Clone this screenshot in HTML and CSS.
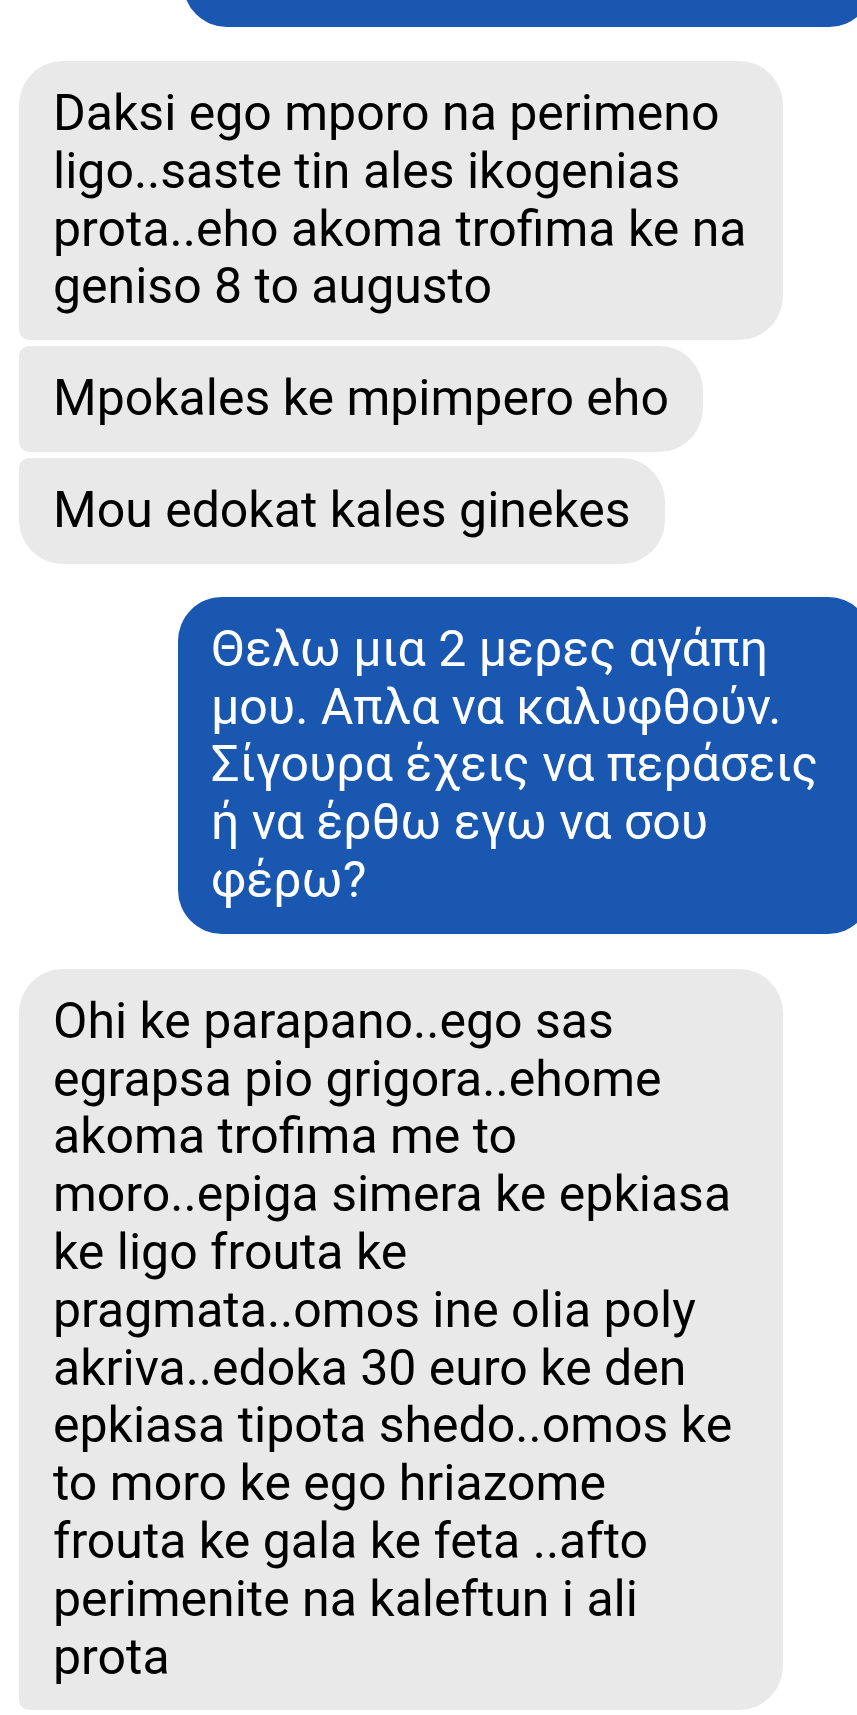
FILE: index.html
```html
<!DOCTYPE html>
<html lang="en">
<head>
    <meta charset="UTF-8">
    <meta name="viewport" content="width=device-width, initial-scale=1.0">
    <title>Chat</title>
    <link rel="stylesheet" href="styles.css">
</head>
<body>
<div class="thread">
    <div class="msg sent sent-tail"></div>

    <div class="group">
        <div class="msg received first wide">
            Daksi ego mporo na perimeno<br>
            ligo..saste tin ales ikogenias<br>
            prota..eho akoma trofima ke na<br>
            geniso 8 to augusto
        </div>
        <div class="msg received middle">Mpokales ke mpimpero eho</div>
        <div class="msg received last">Mou edokat kales ginekes</div>
    </div>

    <div class="msg sent sent-full">
        Θελω μια 2 μερες αγάπη<br>
        μου. Απλα να καλυφθούν.<br>
        Σίγουρα έχεις να περάσεις<br>
        ή να έρθω εγω να σου<br>
        φέρω?
    </div>

    <div class="msg received first wide">
        Ohi ke parapano..ego sas<br>
        egrapsa pio grigora..ehome<br>
        akoma trofima me to<br>
        moro..epiga simera ke epkiasa<br>
        ke ligo frouta ke<br>
        pragmata..omos ine olia poly<br>
        akriva..edoka 30 euro ke den<br>
        epkiasa tipota shedo..omos ke<br>
        to moro ke ego hriazome<br>
        frouta ke gala ke feta ..afto<br>
        perimenite na kaleftun i ali<br>
        prota
    </div>
</div>
</body>
</html>
```

FILE: styles.css
```css
html, body {
    margin: 0;
    padding: 0;
    background: #ffffff;
}
body {
    font-family: Roboto, "Noto Sans", sans-serif;
    font-size: 50px;
    line-height: 57.8px;
    color: #000;
}
.thread {
    width: 857px;
    overflow: hidden;
    display: flex;
    flex-direction: column;
    align-items: flex-start;
    padding-bottom: 40px;
}
.group {
    display: flex;
    flex-direction: column;
    align-items: flex-start;
    gap: 6px;
    margin-top: 34px;
}
.msg {
    box-sizing: border-box;
    padding: 24px 34px;
    border-radius: 44px;
}
.received {
    background: #e9e9e9;
    margin-left: 19px;
}
.received.first {
    border-bottom-left-radius: 10px;
}
.received.middle {
    border-top-left-radius: 10px;
    border-bottom-left-radius: 10px;
}
.received.last {
    border-top-left-radius: 10px;
}
.wide {
    width: 764px;
}
.sent {
    background: #1957b0;
    color: #fff;
}
.sent-tail {
    margin-left: 183px;
    width: 690px;
    height: 90px;
    margin-top: -63px;
    padding: 0;
}
.sent-full {
    margin-left: 178px;
    width: 694px;
    margin-top: 33px;
    padding-left: 33px;
}
.sent-full + .received {
    margin-top: 35px;
}
```
